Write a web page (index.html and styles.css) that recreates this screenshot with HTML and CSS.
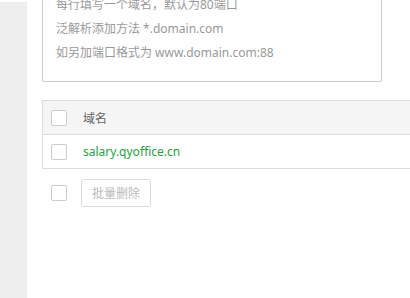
FILE: index.html
```html
<!DOCTYPE html>
<html lang="zh-CN">
<head>
  <meta charset="UTF-8">
  <title>域名管理</title>
  <link rel="stylesheet" href="styles.css">
</head>
<body>
  <div class="layout">
    <div class="sidebar"></div>
    <div class="main">
      <div class="domain-input">
        <div class="hint">每行填写一个域名，默认为80端口</div>
        <div class="hint">泛解析添加方法 *.domain.com</div>
        <div class="hint">如另加端口格式为 www.domain.com:88</div>
      </div>

      <table class="domain-table">
        <thead>
          <tr>
            <th class="col-check"><span class="checkbox"></span></th>
            <th>域名</th>
          </tr>
        </thead>
        <tbody>
          <tr>
            <td class="col-check"><span class="checkbox"></span></td>
            <td><a class="domain-link" href="#">salary.qyoffice.cn</a></td>
          </tr>
        </tbody>
      </table>

      <div class="batch-bar">
        <span class="checkbox"></span>
        <button class="btn-batch" disabled>批量删除</button>
      </div>
    </div>
  </div>
</body>
</html>
```

FILE: styles.css
```css
html, body {
  margin: 0;
  padding: 0;
  height: 100%;
  overflow: hidden;
}

body {
  font-family: "Noto Sans", "Noto Sans CJK SC", sans-serif;
  font-size: 12px;
  color: #666;
  background-color: #fff;
}

.layout {
  display: flex;
  height: 100%;
}

.sidebar {
  width: 27px;
  flex-shrink: 0;
  margin-top: 2px;
  background-color: #eee;
}

.main {
  flex-grow: 1;
  padding-left: 15px;
  margin-top: -13px;
}

.domain-input {
  width: 312px;
  border: 1px solid #ccc;
  border-radius: 2px;
  padding: 5px 13px 16px 13px;
}

.hint {
  line-height: 24px;
  color: #999;
  white-space: nowrap;
}

.domain-table {
  margin-top: 18px;
  width: 400px;
  border-collapse: collapse;
  border: 1px solid #ddd;
}

.domain-table th,
.domain-table td {
  height: 33px;
  padding: 0;
  text-align: left;
  font-weight: normal;
  vertical-align: middle;
  border-bottom: 1px solid #ddd;
}

.domain-table thead tr {
  background-color: #f5f5f5;
}

.domain-table .col-check {
  width: 32px;
  padding-left: 8px;
}

.checkbox {
  display: block;
  width: 14px;
  height: 14px;
  border: 1px solid #ccc;
  border-radius: 2px;
  background-color: #fff;
}

.domain-link {
  color: #20a53a;
  text-decoration: none;
  font-size: 12px;
}

.batch-bar {
  display: flex;
  align-items: center;
  gap: 14px;
  margin-top: 10px;
  padding-left: 9px;
}

.btn-batch {
  font-family: inherit;
  font-size: 12px;
  height: 28px;
  width: 70px;
  padding: 0;
  color: #bbb;
  background-color: #fff;
  border: 1px solid #ddd;
  border-radius: 2px;
}
```
